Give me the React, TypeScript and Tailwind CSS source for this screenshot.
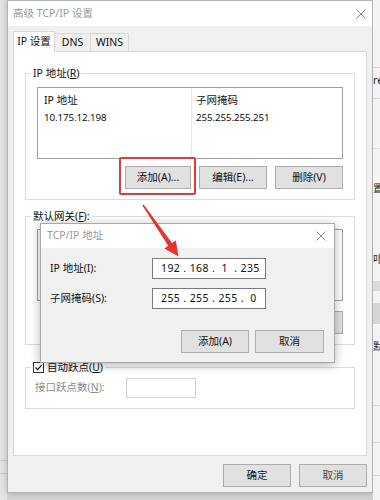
const FONT = "font-['Noto_Sans','Noto_Sans_CJK_SC',sans-serif]"

function WinButton({ label, className = '' }: { label: string; className?: string }) {
  return (
    <div
      className={`flex h-[23px] items-center justify-center border border-[#adadad] bg-[#e1e1e1] text-[10.5px] text-[#111] ${className}`}
    >
      {label}
    </div>
  )
}

function CloseX({ className = '' }: { className?: string }) {
  return (
    <svg width="10" height="10" viewBox="0 0 10 10" className={className}>
      <path d="M0.5 0.5 L9.5 9.5 M9.5 0.5 L0.5 9.5" stroke="#8a8a8a" strokeWidth="1" />
    </svg>
  )
}

function GroupBox({
  label,
  className = '',
  children,
}: {
  label: React.ReactNode
  className?: string
  children?: React.ReactNode
}) {
  return (
    <div className={`relative border border-[#dcdcdc] ${className}`}>
      <div className="absolute -top-[8px] left-[5px] bg-white px-[2px] text-[10.5px] leading-[14px] text-[#111]">
        {label}
      </div>
      {children}
    </div>
  )
}

function TcpIpDialog() {
  return (
    <div className="absolute left-[40px] top-[223px] flex h-[140px] w-[295px] flex-col border border-[#a8a8a8] bg-[#f0f0f0] shadow-[0_2px_10px_rgba(0,0,0,0.3)]">
      <div className="flex h-[24px] items-center justify-between bg-white pl-[6px] pr-[8px]">
        <span className="text-[10.5px] text-[#9a9a9a]">TCP/IP 地址</span>
        <CloseX />
      </div>
      <div className="flex flex-col gap-[9px] pl-[9px] pr-[9px] pt-[10px]">
        <div className="flex items-center">
          <span className="w-[102px] text-[10.5px] text-[#111]">IP 地址(I):</span>
          <div className="flex h-[21px] w-[114px] items-center border border-[#7a7a7a] bg-white pl-[8px] text-[10.5px] tracking-[0.4px] text-[#111] whitespace-pre">
            {'192 . 168 .  1  . 235'}
          </div>
        </div>
        <div className="flex items-center">
          <span className="w-[102px] text-[10.5px] text-[#111]">子网掩码(S):</span>
          <div className="flex h-[21px] w-[114px] items-center border border-[#7a7a7a] bg-white pl-[8px] text-[10.5px] tracking-[0.4px] text-[#111] whitespace-pre">
            {'255 . 255 . 255 .  0'}
          </div>
        </div>
        <div className="mt-[12px] flex justify-end gap-[6px] pr-[1px]">
          <WinButton label="添加(A)" className="h-[21px] w-[68px]" />
          <WinButton label="取消" className="h-[21px] w-[69px]" />
        </div>
      </div>
    </div>
  )
}

function RedArrow() {
  return (
    <svg
      className="absolute left-0 top-0"
      width="380"
      height="500"
      viewBox="0 0 380 500"
      style={{ pointerEvents: 'none' }}
    >
      <polygon
        points="142.4,205.4 168.2,245.8 164.4,248.6 178.5,256.5 175.8,240.4 172,243 143.6,204.6"
        fill="#e8322b"
      />
    </svg>
  )
}

export default function App() {
  return (
    <div className={`relative flex h-[500px] w-[380px] overflow-hidden bg-[#d4d4d4] ${FONT}`}>
      {/* 左边背景窗口 */}
      <div className="flex w-[7px] flex-col bg-[#e4e4e4]">
        <div className="h-[460px]" />
        <div className="h-[1px] bg-[#c8c8c8]" />
        <div className="h-[12px]" />
        <div className="h-[1px] bg-[#c8c8c8]" />
      </div>

      {/* 高级 TCP/IP 设置 */}
      <div className="flex h-[493px] w-[366px] flex-col border border-[#b4b4b4] bg-[#f0f0f0] shadow-[0_0_6px_rgba(0,0,0,0.25)]">
        <div className="flex h-[25px] shrink-0 items-center justify-between bg-white pl-[5px] pr-[6px]">
          <span className="text-[10.5px] text-[#9a9a9a]">高级 TCP/IP 设置</span>
          <CloseX />
        </div>

        <div className="flex flex-col px-[5px] pt-[5px]">
          {/* tabs */}
          <div className="flex h-[20px] items-end">
            <div className="relative z-10 -mb-[1px] flex h-[21px] w-[42px] items-center justify-center border border-b-0 border-[#d9d9d9] bg-white text-[10.5px] text-[#111]">
              IP 设置
            </div>
            <div className="flex h-[18px] w-[36px] items-center justify-center border border-l-0 border-b-0 border-[#d9d9d9] bg-[#f0f0f0] text-[10.5px] text-[#111]">
              DNS
            </div>
            <div className="flex h-[18px] w-[38px] items-center justify-center border border-l-0 border-b-0 border-[#d9d9d9] bg-[#f0f0f0] text-[10.5px] text-[#111]">
              WINS
            </div>
          </div>

          <div className="flex h-[405px] flex-col border border-[#d9d9d9] bg-white px-[11px] pt-[21px]">
            {/* IP 地址 */}
            <GroupBox
              label={
                <>
                  IP 地址(<span className="underline">R</span>)
                </>
              }
              className="h-[127px] px-[11px] pt-[13px]"
            >
              <div className="flex h-[72px] border border-[#a0a0a0] bg-white text-[10.5px] text-[#111]">
                <div className="flex w-[153px] flex-col pl-[6px] pt-[3px]">
                  <span className="leading-[18px]">IP 地址</span>
                  <span className="text-[9.8px] leading-[18px] tracking-[-0.1px]">10.175.12.198</span>
                </div>
                <div className="flex flex-1 flex-col border-l border-[#e6e6e6] pl-[4px] pt-[3px]">
                  <span className="leading-[18px]">子网掩码</span>
                  <span className="text-[9.8px] leading-[18px] tracking-[-0.1px]">255.255.255.251</span>
                </div>
              </div>
              <div className="mt-[7px] flex justify-end gap-[8px]">
                <div className="relative">
                  <WinButton label="添加(A)..." className="w-[66px]" />
                  <div className="absolute -bottom-[6px] -left-[6px] -right-[5px] -top-[9px] rounded-[2px] border-2 border-[#e53a33]" />
                </div>
                <WinButton label="编辑(E)..." className="w-[68px]" />
                <WinButton label="删除(V)" className="w-[68px]" />
              </div>
            </GroupBox>

            {/* 默认网关 */}
            <GroupBox
              label={
                <>
                  默认网关(<span className="underline">F</span>):
                </>
              }
              className="mt-[16px] h-[129px] px-[11px] pt-[12px]"
            >
              <div className="h-[72px] border border-[#a0a0a0] bg-white" />
              <div className="mt-[10px] flex justify-end gap-[8px]">
                <WinButton label="" className="w-[66px]" />
                <WinButton label="" className="w-[68px]" />
                <WinButton label="" className="w-[68px]" />
              </div>
            </GroupBox>

            {/* 自动跃点 */}
            <GroupBox
              label={
                <span className="flex items-center gap-[3px]">
                  <span className="flex h-[11px] w-[11px] items-center justify-center border border-[#333] bg-white">
                    <svg width="9" height="9" viewBox="0 0 9 9">
                      <path d="M1.5 4.5 L3.6 6.6 L7.6 2.2" fill="none" stroke="#111" strokeWidth="1.1" />
                    </svg>
                  </span>
                  <span>
                    自动跃点(<span className="underline">U</span>)
                  </span>
                </span>
              }
              className="mt-[22px] h-[42px] pl-[9px] pt-[10px]"
            >
              <div className="flex items-center">
                <span className="w-[91px] text-[10.5px] text-[#8c8c8c]">
                  接口跃点数(<span className="underline">N</span>):
                </span>
                <div className="h-[20px] w-[70px] border border-[#cfcfcf] bg-white" />
              </div>
            </GroupBox>
          </div>

          <div className="mt-[8px] flex justify-end gap-[8px]">
            <WinButton label="确定" className="h-[22px] w-[68px]" />
            <WinButton label="取消" className="h-[22px] w-[68px] text-[#444]" />
          </div>
        </div>
      </div>

      {/* 右边背景窗口 */}
      <div className="flex flex-1 flex-col overflow-hidden bg-[#f4f4f4] text-[10.5px] text-[#222] whitespace-nowrap">
        <div className="h-[68px] border-b border-[#d8d8d8]" />
        <div className="h-[31px] border-b border-[#d8d8d8] pt-[5px]">re</div>
        <div className="h-[50px] border-b border-[#e0e0e0]" />
        <div className="h-[58px] pt-[32px]">置</div>
        <div className="h-[74px] pt-[45px]">卟</div>
        <div className="h-[10px] bg-[#dadada]" />
        <div className="h-[12px]" />
        <div className="h-[21px] bg-[#d6d6d6]" />
        <div className="h-[45px] pt-[15px]">默</div>
        <div className="h-[37px] border-b border-[#d8d8d8]" />
        <div className="h-[37px] border-b border-[#d8d8d8]" />
        <div className="h-[33px] border-b border-[#d8d8d8]" />
      </div>

      <TcpIpDialog />
      <RedArrow />
    </div>
  )
}
